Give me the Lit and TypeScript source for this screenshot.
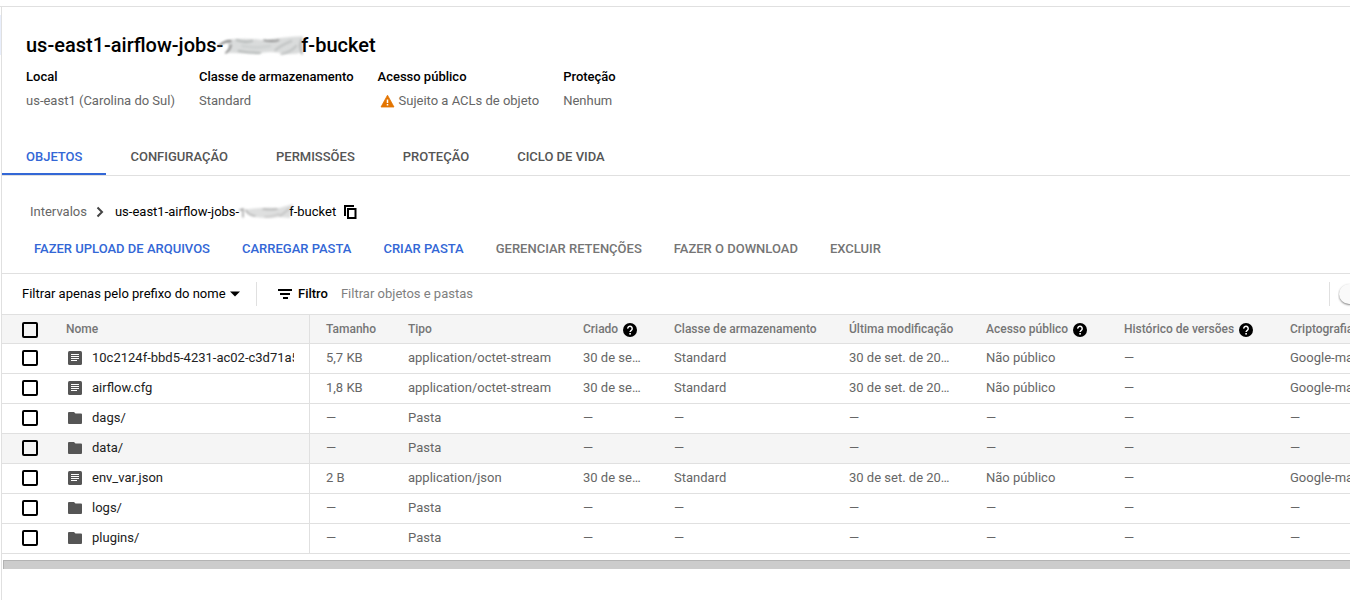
import { LitElement, html, css, nothing } from "lit";
import { customElement, property } from "lit/decorators.js";
import { classMap } from "lit/directives/class-map.js";

interface StorageObject {
  name: string;
  kind: "file" | "folder";
  size?: string;
  type: string;
  active?: boolean;
}

const DASH = "—";

const OBJECTS: StorageObject[] = [
  { name: "10c2124f-bbd5-4231-ac02-c3d71a5e", kind: "file", size: "5,7 KB", type: "application/octet-stream" },
  { name: "airflow.cfg", kind: "file", size: "1,8 KB", type: "application/octet-stream" },
  { name: "dags/", kind: "folder", type: "Pasta" },
  { name: "data/", kind: "folder", type: "Pasta", active: true },
  { name: "env_var.json", kind: "file", size: "2 B", type: "application/json" },
  { name: "logs/", kind: "folder", type: "Pasta" },
  { name: "plugins/", kind: "folder", type: "Pasta" },
];

const COLUMNS = [
  { id: "size", label: "Tamanho" },
  { id: "type", label: "Tipo" },
  { id: "created", label: "Criado", help: true },
  { id: "class", label: "Classe de armazenamento" },
  { id: "modified", label: "Última modificação" },
  { id: "access", label: "Acesso público", help: true },
  { id: "history", label: "Histórico de versões", help: true },
  { id: "crypto", label: "Criptografia" },
];

const TABS = ["Objetos", "Configuração", "Permissões", "Proteção", "Ciclo de vida"];

const ACTIONS = [
  { label: "Fazer upload de arquivos", enabled: true },
  { label: "Carregar pasta", enabled: true },
  { label: "Criar pasta", enabled: true },
  { label: "Gerenciar retenções", enabled: false },
  { label: "Fazer o download", enabled: false },
  { label: "Excluir", enabled: false },
];

@customElement("redacted-text")
export class RedactedText extends LitElement {
  static styles = css`
    :host {
      display: inline-block;
      vertical-align: middle;
    }
    .smudge {
      display: block;
      width: 100%;
      height: 100%;
      overflow: visible;
    }
  `;

  @property() size: "large" | "small" = "large";

  private large() {
    return html`<svg class="smudge" viewBox="0 0 80 20" aria-hidden="true">
      <defs>
        <filter id="soft" x="-10%" y="-20%" width="120%" height="140%"><feGaussianBlur stdDeviation="1" /></filter>
        <filter id="fine" x="-10%" y="-20%" width="120%" height="140%"><feGaussianBlur stdDeviation="0.9" /></filter>
      </defs>
      <path d="M2 3Q24 0 42 3Q60 0 82 -1L82 15Q70 19 58 16Q46 14 36 17L4 16Q8 9 2 3Z" fill="#dadcdc" filter="url(#soft)" />
      <g fill="none" stroke-linecap="round" filter="url(#fine)">
        <path d="M-4 9Q0 4 8 4" stroke="#777" stroke-width="1.600" />
        <path d="M3 16Q8 12 8 8" stroke="#888" stroke-width="1.800" />
        <path d="M14 3Q22 6 30 4M16 14Q26 16 38 16" stroke="#b4b8b7" stroke-width="2" />
        <path d="M42 3Q50 5 57 3" stroke="#888" stroke-width="1.600" />
        <path d="M54 13Q60 8 70 4M60 17Q70 15 75 9" stroke="#c2c5c5" stroke-width="2.500" />
        <path d="M20 9Q34 12 48 9" stroke="#cfd2d2" stroke-width="3" />
        <path d="M80 3Q78 10 81 17" stroke="#b2b4b4" stroke-width="1.800" />
      </g>
    </svg>`;
  }

  private small() {
    return html`<svg class="smudge" viewBox="0 0 50 14" aria-hidden="true">
      <defs>
        <filter id="soft" x="-10%" y="-30%" width="120%" height="160%"><feGaussianBlur stdDeviation="0.9" /></filter>
      </defs>
      <g filter="url(#soft)" fill="none" stroke-linecap="round">
        <path d="M5 4Q20 1 40 2L54 -2L51 12L40 11Q28 13 16 11Q8 10 5 4Z" fill="#dedfdf" />
        <path d="M1 4L4 3V11" stroke="#999" stroke-width="1.400" />
        <path d="M7 4Q9 9 16 10M24 3Q32 4 38 3" stroke="#b2b2b2" stroke-width="1.600" />
        <path d="M26 11Q34 11 40 8" stroke="#ccc" stroke-width="2" />
        <path d="M41 10L50 3" stroke="#c4c4c4" stroke-width="2" />
      </g>
    </svg>`;
  }

  render() {
    return this.size === "large" ? this.large() : this.small();
  }
}

@customElement("app-root")
export class AppRoot extends LitElement {
  static styles = css`
    :host {
      display: block;
      font-family: Roboto, "Liberation Sans", sans-serif;
      font-size: 13px;
      line-height: 20px;
      color: #000;
      background: #fff;
    }
    * {
      box-sizing: border-box;
    }
    button,
    input,
    select {
      font: inherit;
      color: inherit;
      margin: 0;
      border: 0;
      padding: 0;
      background: none;
    }
    a {
      color: inherit;
      text-decoration: none;
    }
    svg {
      display: block;
      flex: none;
    }
    .topbar {
      height: 7px;
      border-bottom: 1px solid #e0e0e0;
    }
    .shell {
      display: flex;
      min-height: calc(100vh - 7px);
    }
    .rail {
      width: 2px;
      flex: none;
      padding-top: 8px;
      border-right: 1px solid #e0e0e0;
    }
    .rail-current {
      height: 40px;
      background: #e8eefc;
    }
    .page {
      flex: 1;
      min-width: 0;
      overflow: hidden;
    }
    .header {
      padding: 24px 24px 0;
    }
    .title {
      margin: 0;
      font-size: 20px;
      line-height: 28px;
      font-weight: 500;
      white-space: nowrap;
    }
    .title-redacted {
      width: 78px;
      height: 20px;
    }
    .facts {
      display: flex;
      gap: 24px;
      margin: 8px 0 0;
    }
    .fact-name {
      font-weight: 500;
    }
    .fact-value {
      display: flex;
      align-items: center;
      gap: 3px;
      margin: 4px 0 0;
      color: #666;
    }
    .tabs {
      display: flex;
      margin-top: 26px;
      border-bottom: 1px solid #e0e0e0;
    }
    .tab {
      height: 38px;
      padding: 4px 24px 0;
      border-bottom: 2px solid transparent;
      font-weight: 500;
      text-transform: uppercase;
      color: #555;
      cursor: pointer;
    }
    .tab.selected {
      color: #3367d6;
      border-bottom-color: #3367d6;
    }
    .crumbs {
      display: flex;
      align-items: center;
      padding: 26px 28px 0;
    }
    .crumb-parent {
      color: #666;
    }
    .crumb-arrow {
      margin: 0 10px 0 8px;
    }
    .crumb-redacted {
      width: 50px;
      height: 14px;
    }
    .copy {
      margin-left: 8px;
      cursor: pointer;
    }
    .actions {
      display: flex;
      gap: 32px;
      padding: 17px 32px 14px;
      border-bottom: 1px solid #e0e0e0;
    }
    .action {
      font-weight: 500;
      text-transform: uppercase;
      white-space: nowrap;
      color: #3367d6;
      cursor: pointer;
    }
    .action:disabled {
      color: #757575;
      cursor: default;
    }
    .filterbar {
      display: flex;
      align-items: center;
      height: 40px;
      padding-left: 20px;
    }
    .scope {
      display: flex;
      align-items: center;
      gap: 4px;
      padding-right: 16px;
    }
    .scope-select {
      appearance: none;
      outline: none;
    }
    .divider {
      width: 1px;
      height: 24px;
      flex: none;
      background: #e0e0e0;
    }
    .filter-label {
      display: flex;
      align-items: center;
      gap: 6px;
      margin: 0 13px 0 21px;
      font-weight: 500;
    }
    .filter-input {
      flex: 1;
      min-width: 0;
      outline: none;
    }
    .filter-input::placeholder {
      color: #808080;
      opacity: 1;
    }
    .switch {
      width: 12px;
      margin-left: 8px;
      overflow: hidden;
      flex: none;
    }
    .knob {
      appearance: none;
      display: block;
      width: 20px;
      height: 20px;
      margin: 2px 0 3px 1px;
      border-radius: 50%;
      background: #fafafa;
      box-shadow: 0 1px 2px rgba(0, 0, 0, 0.5);
    }
    .grid {
      table-layout: fixed;
      width: 1449px;
      border-collapse: separate;
      border-spacing: 0;
      border-top: 1px solid #e0e0e0;
    }
    .c-check {
      width: 48px;
    }
    .c-name {
      width: 260px;
    }
    .c-size {
      width: 82px;
    }
    .c-created {
      width: 91px;
    }
    .c-type,
    .c-class {
      width: 175px;
    }
    .c-modified {
      width: 137px;
    }
    .c-access {
      width: 138px;
    }
    .c-history {
      width: 166px;
    }
    .cell,
    .head {
      height: 30px;
      padding: 0 16px 2px;
      border-bottom: 1px solid #e0e0e0;
      text-align: left;
      font-weight: 400;
      white-space: nowrap;
      overflow: hidden;
      text-overflow: ellipsis;
      color: #666;
    }
    .head {
      height: 29px;
      padding: 0 0 0 16px;
      background: #f5f5f5;
      font-size: 12px;
      font-weight: 500;
      color: #757575;
    }
    .head-inner {
      display: flex;
      align-items: center;
      gap: 5px;
    }
    .help {
      margin-top: 2px;
    }
    .check {
      padding: 0 0 2px 20px;
    }
    .head.check {
      padding: 2px 0 0 20px;
    }
    .type {
      padding-right: 8px;
    }
    .name {
      padding: 0 15px 2px 16px;
      border-right: 1px solid #e0e0e0;
      color: #212121;
    }
    .name-inner {
      display: flex;
      align-items: center;
      gap: 10px;
      padding-left: 2px;
      overflow: hidden;
    }
    .name-head {
      border-right: 1px solid #e0e0e0;
    }
    .active .cell {
      background: #f5f5f5;
    }
    .box {
      appearance: none;
      display: block;
      width: 16px;
      height: 16px;
      border: 2px solid #000;
      border-radius: 2px;
    }
    .box:checked {
      background: #000;
    }
    .scrollbar {
      height: 9px;
      margin: 6px 0 0 1px;
      background: #ccc;
      border-top: 1px solid #b3b3b3;
      border-left: 1px solid #b3b3b3;
    }
  `;

  private help() {
    return html`<svg class="help" width="14" height="14" viewBox="0 0 14 14" role="img" aria-label="Ajuda">
      <circle cx="7" cy="7" r="7" fill="#000" />
      <path d="M4.800 5.600a2.200 2.200 0 1 1 3.500 1.700C7.500 7.900 7.100 8.200 7.100 9" fill="none" stroke="#fff" stroke-width="1.500" />
      <rect x="6.300" y="10" width="1.600" height="1.600" fill="#fff" />
    </svg>`;
  }

  private icon(kind: StorageObject["kind"]) {
    return kind === "file"
      ? html`<svg width="14" height="14" viewBox="0 0 14 14" aria-hidden="true">
          <rect width="14" height="14" rx="1.500" fill="#555" />
          <path d="M3 3.500h8M3 5.500h8M3 7.500h8M3 9.500h6" stroke="#fff" />
        </svg>`
      : html`<svg width="14" height="14" viewBox="0 0 14 14" aria-hidden="true">
          <path d="M1 1h5l1.500 1.500H13a1 1 0 0 1 1 1V12a1 1 0 0 1-1 1H1a1 1 0 0 1-1-1V2a1 1 0 0 1 1-1z" fill="#555" />
        </svg>`;
  }

  private row(o: StorageObject) {
    const file = o.kind === "file";
    const values = [
      o.size ?? DASH,
      o.type,
      file ? "30 de set. de 2022" : DASH,
      file ? "Standard" : DASH,
      file ? "30 de set. de 2022 10:00:00" : DASH,
      file ? "Não público" : DASH,
      DASH,
      file ? "Google-managed key" : DASH,
    ];
    return html`<tr class=${classMap({ active: !!o.active })}>
      <td class="cell check"><input class="box" type="checkbox" aria-label=${o.name} /></td>
      <td class="cell name"><a class="name-inner" href="#">${this.icon(o.kind)}<span>${o.name}</span></a></td>
      ${values.map((v, i) => html`<td class=${classMap({ cell: true, type: COLUMNS[i].id === "type" })}>${v}</td>`)}
    </tr>`;
  }

  render() {
    return html`
      <div class="topbar"></div>
      <div class="shell">
        <div class="rail"><div class="rail-current"></div></div>
        <main class="page">
          <header class="header">
            <h1 class="title">us-east1-airflow-jobs-<redacted-text class="title-redacted"></redacted-text>f-bucket</h1>
            <dl class="facts">
              <div><dt class="fact-name">Local</dt><dd class="fact-value">us-east1 (Carolina do Sul)</dd></div>
              <div><dt class="fact-name">Classe de armazenamento</dt><dd class="fact-value">Standard</dd></div>
              <div>
                <dt class="fact-name">Acesso público</dt>
                <dd class="fact-value">
                  <svg width="18" height="18" viewBox="0 0 18 18" aria-hidden="true">
                    <path d="M9.500 3.200 16 15H3z" fill="#e37400" stroke="#e37400" stroke-width="0.800" stroke-linejoin="round" />
                    <path d="M9.500 7.500v3.600M9.500 12v1.500" stroke="#fff" stroke-width="1.500" />
                  </svg>
                  Sujeito a ACLs de objeto
                </dd>
              </div>
              <div><dt class="fact-name">Proteção</dt><dd class="fact-value">Nenhum</dd></div>
            </dl>
          </header>

          <div class="tabs" role="tablist">
            ${TABS.map((t, i) => html`<button class=${classMap({ tab: true, selected: i === 0 })} role="tab" aria-selected=${i === 0}>${t}</button>`)}
          </div>

          <nav class="crumbs">
            <a class="crumb-parent" href="#">Intervalos</a>
            <svg class="crumb-arrow" width="10" height="12" viewBox="0 0 10 12" aria-hidden="true">
              <path d="M2.500 1.500 7 6 2.500 10.500" fill="none" stroke="#444" stroke-width="2" />
            </svg>
            <span>us-east1-airflow-jobs-<redacted-text class="crumb-redacted" size="small"></redacted-text>f-bucket</span>
            <button class="copy" aria-label="Copiar">
              <svg width="14" height="14" viewBox="0 0 14 14" aria-hidden="true">
                <path d="M1 11V1h9M4 4h7.500v9H4z" fill="none" stroke="#000" stroke-width="2" />
              </svg>
            </button>
          </nav>

          <div class="actions">
            ${ACTIONS.map((a) => html`<button class="action" ?disabled=${!a.enabled}>${a.label}</button>`)}
          </div>

          <div class="filterbar">
            <div class="scope">
              <select class="scope-select" aria-label="Escopo do filtro">
                <option>Filtrar apenas pelo prefixo do nome</option>
              </select>
              <svg width="10" height="6" viewBox="0 0 10 6" aria-hidden="true"><path d="M0 .5h10L5 5.500z" /></svg>
            </div>
            <span class="divider"></span>
            <label class="filter-label" for="filter">
              <svg width="14" height="10" viewBox="0 0 14 10" aria-hidden="true"><path d="M0 0h14v2H0zM2 4h10v2H2zM5 8h5v2H5z" /></svg>
              Filtro
            </label>
            <input class="filter-input" id="filter" type="text" placeholder="Filtrar objetos e pastas" />
            <span class="divider"></span>
            <div class="switch"><input class="knob" type="checkbox" role="switch" aria-label="Mostrar dados excluídos" /></div>
          </div>

          <table class="grid">
            <colgroup>
              <col class="c-check" />
              <col class="c-name" />
              ${COLUMNS.map((c) => html`<col class="c-${c.id}" />`)}
            </colgroup>
            <thead>
              <tr>
                <th class="head check"><input class="box" type="checkbox" aria-label="Selecionar tudo" /></th>
                <th class="head name-head">Nome</th>
                ${COLUMNS.map((c) => html`<th class="head"><div class="head-inner">${c.label}${c.help ? this.help() : nothing}</div></th>`)}
              </tr>
            </thead>
            <tbody>
              ${OBJECTS.map((o) => this.row(o))}
            </tbody>
          </table>
          <div class="scrollbar"></div>
        </main>
      </div>
    `;
  }
}
